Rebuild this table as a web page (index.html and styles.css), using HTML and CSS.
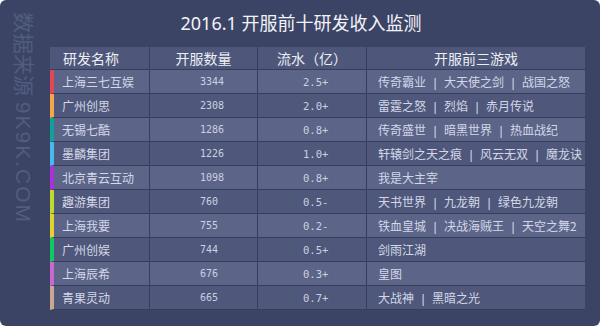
FILE: index.html
```html
<!DOCTYPE html>
<html lang="zh-CN">
<head>
<meta charset="utf-8">
<title>2016.1 开服前十研发收入监测</title>
<link rel="stylesheet" href="styles.css">
</head>
<body>
<div class="frame">
  <div class="watermark">数据来源 <span class="wm-site">9K9K.COM</span></div>
  <h1 class="title">2016.1 开服前十研发收入监测</h1>
  <table class="board">
    <colgroup>
      <col class="c1"><col class="c2"><col class="c3"><col class="c4">
    </colgroup>
    <thead>
      <tr>
        <th class="h-name">研发名称</th>
        <th>开服数量</th>
        <th>流水（亿）</th>
        <th>开服前三游戏</th>
      </tr>
    </thead>
    <tbody>
      <tr class="odd"><td class="name b1">上海三七互娱</td><td class="num">3344</td><td class="flow">2.5+</td><td class="games">传奇霸业<span class="sep">|</span>大天使之剑<span class="sep">|</span>战国之怒</td></tr>
      <tr><td class="name b2">广州创思</td><td class="num">2308</td><td class="flow">2.0+</td><td class="games">雷霆之怒<span class="sep">|</span>烈焰<span class="sep">|</span>赤月传说</td></tr>
      <tr class="odd"><td class="name b3">无锡七酷</td><td class="num">1286</td><td class="flow">0.8+</td><td class="games">传奇盛世<span class="sep">|</span>暗黑世界<span class="sep">|</span>热血战纪</td></tr>
      <tr><td class="name b4">墨麟集团</td><td class="num">1226</td><td class="flow">1.0+</td><td class="games">轩辕剑之天之痕<span class="sep">|</span>风云无双<span class="sep">|</span>魔龙诀</td></tr>
      <tr class="odd"><td class="name b5">北京青云互动</td><td class="num">1098</td><td class="flow">0.8+</td><td class="games">我是大主宰</td></tr>
      <tr><td class="name b6">趣游集团</td><td class="num">760</td><td class="flow">0.5-</td><td class="games">天书世界<span class="sep">|</span>九龙朝<span class="sep">|</span>绿色九龙朝</td></tr>
      <tr class="odd"><td class="name b7">上海我要</td><td class="num">755</td><td class="flow">0.2-</td><td class="games">铁血皇城<span class="sep">|</span>决战海贼王<span class="sep">|</span>天空之舞2</td></tr>
      <tr><td class="name b8">广州创娱</td><td class="num">744</td><td class="flow">0.5+</td><td class="games">剑雨江湖</td></tr>
      <tr class="odd"><td class="name b9">上海辰希</td><td class="num">676</td><td class="flow">0.3+</td><td class="games">皇图</td></tr>
      <tr><td class="name b10">青果灵动</td><td class="num">665</td><td class="flow">0.7+</td><td class="games">大战神<span class="sep">|</span>黑暗之光</td></tr>
    </tbody>
  </table>
</div>
</body>
</html>
```
FILE: styles.css
```css
html, body {
  margin: 0;
  padding: 0;
  background: #ffffff;
}

.frame {
  width: 600px;
  height: 326px;
  box-sizing: border-box;
  background: #3c4466;
  border-radius: 6px;
  display: grid;
  grid-template-columns: 50px 535px 15px;
  grid-template-rows: 47px auto;
  font-family: "Noto Sans CJK SC", "Noto Sans", sans-serif;
  overflow: hidden;
}

.watermark {
  grid-column: 1;
  grid-row: 1 / -1;
  writing-mode: vertical-rl;
  text-orientation: sideways;
  font-family: "Liberation Sans", "Noto Sans CJK SC", sans-serif;
  font-size: 21px;
  line-height: 22px;
  color: #525c7e;
  padding-top: 12px;
  padding-right: 16px;
  white-space: nowrap;
}

.wm-site {
  letter-spacing: 2px;
}

.title {
  grid-column: 1 / -1;
  grid-row: 1;
  margin: 0;
  font-family: "Noto Sans", "Noto Sans CJK SC", sans-serif;
  font-weight: normal;
  font-size: 18px;
  line-height: 47px;
  text-align: center;
  color: #f2f3f8;
  padding-left: 2px;
}

.board {
  grid-column: 2;
  grid-row: 2;
  width: 535px;
  border-collapse: separate;
  border-spacing: 0;
  table-layout: fixed;
  align-self: start;
}

.c1 { width: 100px; }
.c2 { width: 108px; }
.c3 { width: 109px; }
.c4 { width: 218px; }

.board th,
.board td {
  padding: 0;
  border-right: 1px solid #363d5d;
  border-bottom: 1px solid #363d5d;
  white-space: nowrap;
  overflow: hidden;
}

.board th:last-child,
.board td:last-child {
  border-right: none;
}

.board th {
  height: 22px;
  background: #4e577a;
  color: #eceef5;
  font-weight: normal;
  font-size: 14px;
  text-align: center;
}

.board th.h-name {
  text-align: left;
  padding-left: 13px;
}

.board td {
  height: 23px;
  background: #4f587a;
  color: #d3d7e8;
  font-size: 12px;
}

.board tr.odd td {
  background: #5c6588;
}

.name {
  border-left: 4px solid transparent;
  padding-left: 8px !important;
}

.num {
  padding-left: 50px !important;
  font-family: "DejaVu Sans Mono", "Liberation Mono", monospace;
  font-size: 10px !important;
  color: #ccd0e2 !important;
}

.flow {
  padding-left: 45px !important;
  font-family: "DejaVu Sans Mono", "Liberation Mono", monospace;
  font-size: 10.5px !important;
  color: #ccd0e2 !important;
}

.games {
  padding-left: 11px !important;
}

.sep {
  display: inline-block;
  width: 18px;
  text-align: center;
  font-family: "Liberation Sans", sans-serif;
}

.b1 { border-left-color: #e04858; }
.b2 { border-left-color: #f5a64a; }
.b3 { border-left-color: #12a09e; }
.b4 { border-left-color: #4ab8f0; }
.b5 { border-left-color: #a832d8; }
.b6 { border-left-color: #c2d832; }
.b7 { border-left-color: #e2d232; }
.b8 { border-left-color: #12c862; }
.b9 { border-left-color: #c868d0; }
.b10 { border-left-color: #c8a890; }
```
